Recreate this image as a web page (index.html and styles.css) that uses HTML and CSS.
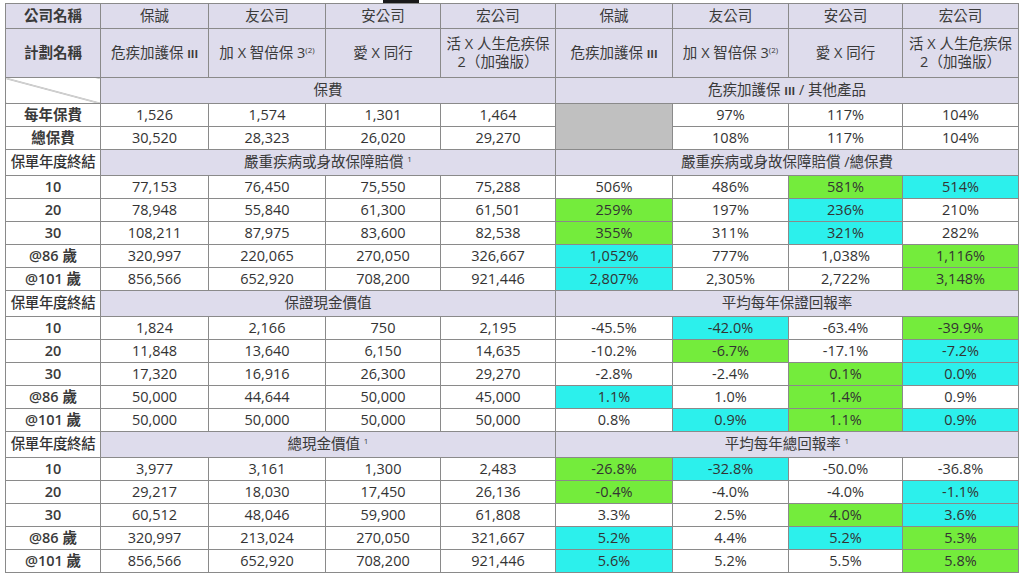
FILE: index.html
```html
<!DOCTYPE html>
<html lang="zh-Hant">
<head>
<meta charset="utf-8">
<title>危疾保比較</title>
<link rel="stylesheet" href="styles.css">
</head>
<body>
<div class="page">
  <div class="mark"></div>
  <table class="cmp">
    <colgroup>
      <col class="c0"><col class="c1"><col class="c2"><col class="c3"><col class="c4">
      <col class="c5"><col class="c6"><col class="c7"><col class="c8">
    </colgroup>
    <tbody>
      <tr class="r-top hd">
        <td class="lbl">公司名稱</td>
        <td>保誠</td><td>友公司</td><td>安公司</td><td>宏公司</td>
        <td>保誠</td><td>友公司</td><td>安公司</td><td>宏公司</td>
      </tr>
      <tr class="r-plan hd">
        <td class="lbl">計劃名稱</td>
        <td>危疾加護保 <span class="roman">III</span></td>
        <td>加 X 智倍保 3<sup>(2)</sup></td>
        <td>愛 X 同行</td>
        <td>活 X 人生危疾保<br>2（加強版）</td>
        <td>危疾加護保 <span class="roman">III</span></td>
        <td>加 X 智倍保 3<sup>(2)</sup></td>
        <td>愛 X 同行</td>
        <td>活 X 人生危疾保<br>2（加強版）</td>
      </tr>
      <tr class="r-sec">
        <td class="diag"></td>
        <td class="sec" colspan="4">保費</td>
        <td class="sec" colspan="4">危疾加護保 <span class="roman">III</span> / 其他產品</td>
      </tr>
      <tr class="r-data">
        <td class="lbl">每年保費</td>
        <td>1,526</td><td>1,574</td><td>1,301</td><td>1,464</td>
        <td class="gray" rowspan="2"></td><td>97%</td><td>117%</td><td>104%</td>
      </tr>
      <tr class="r-data">
        <td class="lbl">總保費</td>
        <td>30,520</td><td>28,323</td><td>26,020</td><td>29,270</td>
        <td>108%</td><td>117%</td><td>104%</td>
      </tr>

      <tr class="r-sec">
        <td class="lbl-sec">保單年度終結</td>
        <td class="sec" colspan="4">嚴重疾病或身故保障賠償 <sup>1</sup></td>
        <td class="sec" colspan="4">嚴重疾病或身故保障賠償 /總保費</td>
      </tr>
      <tr class="r-data">
        <td class="lbl">10</td>
        <td>77,153</td><td>76,450</td><td>75,550</td><td>75,288</td>
        <td>506%</td><td>486%</td><td class="g">581%</td><td class="c">514%</td>
      </tr>
      <tr class="r-data">
        <td class="lbl">20</td>
        <td>78,948</td><td>55,840</td><td>61,300</td><td>61,501</td>
        <td class="g">259%</td><td>197%</td><td class="c">236%</td><td>210%</td>
      </tr>
      <tr class="r-data">
        <td class="lbl">30</td>
        <td>108,211</td><td>87,975</td><td>83,600</td><td>82,538</td>
        <td class="g">355%</td><td>311%</td><td class="c">321%</td><td>282%</td>
      </tr>
      <tr class="r-data">
        <td class="lbl">@86 歲</td>
        <td>320,997</td><td>220,065</td><td>270,050</td><td>326,667</td>
        <td class="c">1,052%</td><td>777%</td><td>1,038%</td><td class="g">1,116%</td>
      </tr>
      <tr class="r-data">
        <td class="lbl">@101 歲</td>
        <td>856,566</td><td>652,920</td><td>708,200</td><td>921,446</td>
        <td class="c">2,807%</td><td>2,305%</td><td>2,722%</td><td class="g">3,148%</td>
      </tr>

      <tr class="r-sec">
        <td class="lbl-sec">保單年度終結</td>
        <td class="sec" colspan="4">保證現金價值</td>
        <td class="sec" colspan="4">平均每年保證回報率</td>
      </tr>
      <tr class="r-data">
        <td class="lbl">10</td>
        <td>1,824</td><td>2,166</td><td>750</td><td>2,195</td>
        <td>-45.5%</td><td class="c">-42.0%</td><td>-63.4%</td><td class="g">-39.9%</td>
      </tr>
      <tr class="r-data">
        <td class="lbl">20</td>
        <td>11,848</td><td>13,640</td><td>6,150</td><td>14,635</td>
        <td>-10.2%</td><td class="g">-6.7%</td><td>-17.1%</td><td class="c">-7.2%</td>
      </tr>
      <tr class="r-data">
        <td class="lbl">30</td>
        <td>17,320</td><td>16,916</td><td>26,300</td><td>29,270</td>
        <td>-2.8%</td><td>-2.4%</td><td class="g">0.1%</td><td class="c">0.0%</td>
      </tr>
      <tr class="r-data">
        <td class="lbl">@86 歲</td>
        <td>50,000</td><td>44,644</td><td>50,000</td><td>45,000</td>
        <td class="c">1.1%</td><td>1.0%</td><td class="g">1.4%</td><td>0.9%</td>
      </tr>
      <tr class="r-data">
        <td class="lbl">@101 歲</td>
        <td>50,000</td><td>50,000</td><td>50,000</td><td>50,000</td>
        <td>0.8%</td><td class="c">0.9%</td><td class="g">1.1%</td><td class="c">0.9%</td>
      </tr>

      <tr class="r-sec">
        <td class="lbl-sec">保單年度終結</td>
        <td class="sec" colspan="4">總現金價值 <sup>1</sup></td>
        <td class="sec" colspan="4">平均每年總回報率 <sup>1</sup></td>
      </tr>
      <tr class="r-data">
        <td class="lbl">10</td>
        <td>3,977</td><td>3,161</td><td>1,300</td><td>2,483</td>
        <td class="g">-26.8%</td><td class="c">-32.8%</td><td>-50.0%</td><td>-36.8%</td>
      </tr>
      <tr class="r-data">
        <td class="lbl">20</td>
        <td>29,217</td><td>18,030</td><td>17,450</td><td>26,136</td>
        <td class="g">-0.4%</td><td>-4.0%</td><td>-4.0%</td><td class="c">-1.1%</td>
      </tr>
      <tr class="r-data">
        <td class="lbl">30</td>
        <td>60,512</td><td>48,046</td><td>59,900</td><td>61,808</td>
        <td>3.3%</td><td>2.5%</td><td class="g">4.0%</td><td class="c">3.6%</td>
      </tr>
      <tr class="r-data">
        <td class="lbl">@86 歲</td>
        <td>320,997</td><td>213,024</td><td>270,050</td><td>321,667</td>
        <td class="c">5.2%</td><td>4.4%</td><td class="c">5.2%</td><td class="g">5.3%</td>
      </tr>
      <tr class="r-data">
        <td class="lbl">@101 歲</td>
        <td>856,566</td><td>652,920</td><td>708,200</td><td>921,446</td>
        <td class="c">5.6%</td><td>5.2%</td><td>5.5%</td><td class="g">5.8%</td>
      </tr>
    </tbody>
  </table>
</div>
</body>
</html>
```

FILE: styles.css
```css
html, body {
  margin: 0;
  padding: 0;
  background: #ffffff;
}

.page {
  width: 1024px;
  height: 576px;
  padding-left: 5px;
  box-sizing: border-box;
  overflow: hidden;
  font-family: "Open Sans", "Noto Sans CJK TC", sans-serif;
  color: #333333;
}

.mark {
  margin-left: 378px;
  width: 36px;
  height: 3px;
  background: #1a1a1a;
}

.cmp {
  border-collapse: collapse;
  table-layout: fixed;
  width: 1013px;
  font-size: 14.5px;
  line-height: 1.25;
}

.c0 { width: 95px; }
.c1 { width: 108px; }
.c2 { width: 117px; }
.c3 { width: 115px; }
.c4 { width: 115px; }
.c5 { width: 117px; }
.c6 { width: 116px; }
.c7 { width: 114px; }
.c8 { width: 116px; }

.cmp td {
  border: 1px solid #8a8a8a;
  padding: 0;
  text-align: center;
  vertical-align: middle;
  white-space: nowrap;
  overflow: hidden;
}

.r-top { height: 25px; }
.r-plan { height: 49px; }
.r-sec { height: 26px; }
.r-data { height: 23px; }

.hd td {
  background: #dedcec;
  color: #3a3a3a;
}

.hd td.lbl {
  font-weight: 600;
}

.lbl {
  font-weight: 600;
  background: #ffffff;
  color: #3a3a3a;
}

.lbl-sec {
  background: #ffffff;
  font-weight: 500;
  letter-spacing: -0.4px;
}

.sec {
  background: #dedcec;
  color: #3a3a3a;
}

.diag {
  background: #ffffff linear-gradient(to top right, transparent calc(50% - 0.8px), #8a8a8a 50%, transparent calc(50% + 0.8px));
}

.roman {
  font-size: 11px;
  font-weight: 700;
}

sup {
  font-size: 8px;
  line-height: 0;
  vertical-align: 5px;
}

.gray { background: #c0c0c0; }
.g { background: #74ec3c; }
.c { background: #2cf0ec; }
```
